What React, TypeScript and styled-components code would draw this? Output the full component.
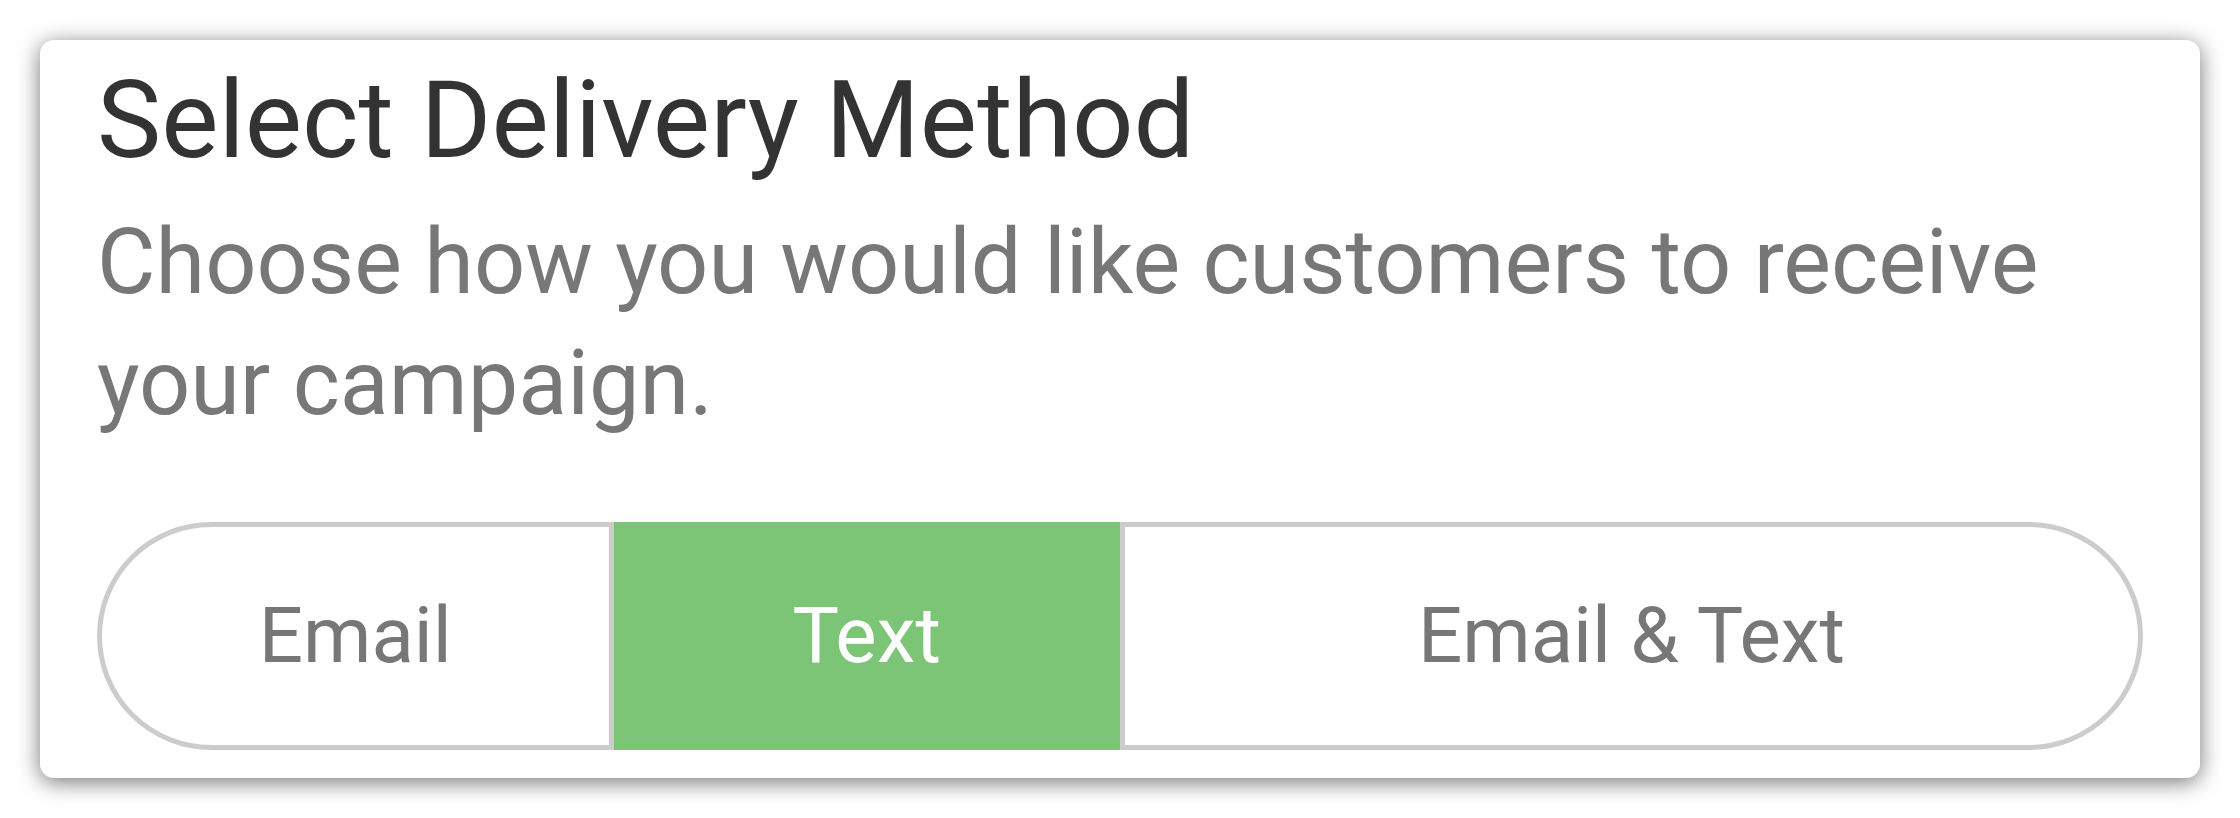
import { useState } from "react";
import styled, { createGlobalStyle } from "styled-components";

const GlobalStyle = createGlobalStyle`
  html, body {
    margin: 0;
    padding: 0;
    background: #ffffff;
    font-family: Roboto, "Liberation Sans", Arial, sans-serif;
  }
`;

const Page = styled.div`
  box-sizing: border-box;
  width: 2240px;
  height: 818px;
  padding: 40px;
`;

const Card = styled.section`
  box-sizing: border-box;
  width: 2160px;
  height: 738px;
  padding: 17px 57px 28px;
  background: #ffffff;
  border-radius: 14px;
  box-shadow: 0 4px 22px rgba(0, 0, 0, 0.55);
  display: flex;
  flex-direction: column;
`;

const Title = styled.h1`
  margin: 0;
  font-size: 108px;
  line-height: 126px;
  font-weight: 400;
  color: #333333;
`;

const Subtitle = styled.p`
  margin: 19px 0 0;
  font-size: 90px;
  line-height: 121px;
  font-weight: 400;
  color: #777777;
`;

const Toggle = styled.div`
  margin-top: auto;
  box-sizing: border-box;
  height: 228px;
  display: flex;
  border: 5px solid #cccccc;
  border-radius: 114px;
`;

const Option = styled.button<{ $active: boolean; $grow: number }>`
  flex: ${(p) => p.$grow} 1 0;
  margin: ${(p) => (p.$active ? "-5px 0" : "0")};
  border: none;
  border-left: 5px solid #cccccc;
  background: ${(p) => (p.$active ? "#7dc576" : "transparent")};
  color: ${(p) => (p.$active ? "#ffffff" : "#777777")};
  font-family: inherit;
  font-size: 78px;
  font-weight: 400;
  cursor: pointer;
  padding: 0 0 2px;

  &:first-child {
    border-left: none;
  }
`;

const options = [
  { label: "Email", grow: 1 },
  { label: "Text", grow: 1 },
  { label: "Email & Text", grow: 2 },
];

export default function App() {
  const [selected, setSelected] = useState("Text");

  return (
    <>
      <GlobalStyle />
      <Page>
        <Card>
          <Title>Select Delivery Method</Title>
          <Subtitle>
            Choose how you would like customers to receive
            <br />
            your campaign.
          </Subtitle>
          <Toggle>
            {options.map((o) => (
              <Option
                key={o.label}
                $active={selected === o.label}
                $grow={o.grow}
                onClick={() => setSelected(o.label)}
              >
                {o.label}
              </Option>
            ))}
          </Toggle>
        </Card>
      </Page>
    </>
  );
}
